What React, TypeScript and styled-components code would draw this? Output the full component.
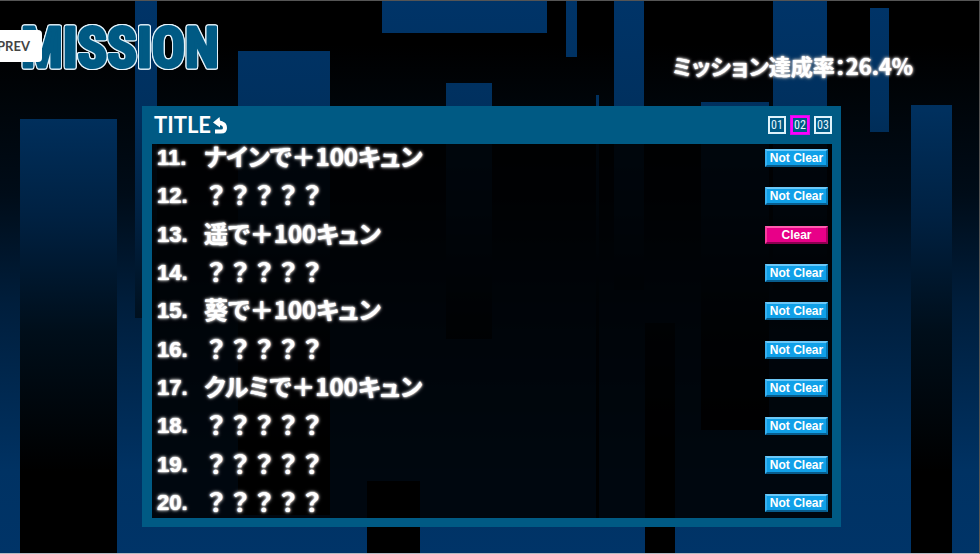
import React, { useState } from 'react';
import styled, { createGlobalStyle } from 'styled-components';

const gothic = '"Noto Sans CJK JP", sans-serif';
const sans = '"Liberation Sans", sans-serif';
const condensed =
  '"Roboto Condensed", "Open Sans Condensed", "Noto Sans Condensed", "Liberation Sans", sans-serif';
const teal = '#005a84';

const GlobalStyle = createGlobalStyle`
  *, *::before, *::after { box-sizing: border-box; }
  body { margin: 0; background: #000; color: #fff; font-family: ${gothic}; }
`;

const Page = styled.div`
  position: relative;
  isolation: isolate;
  display: flex;
  flex-direction: column;
  min-height: 100vh;
  overflow: hidden;
  border-top: 1px solid #555;
  border-right: 1px solid #555;
  border-bottom: 1px solid #b4bac2;
`;

const Backdrop = styled.svg`
  position: absolute;
  top: -1px;
  left: 0;
  z-index: -1;
  width: calc(100% + 1px);
  height: calc(100% + 2px);
`;

const Header = styled.header`
  display: flex;
  justify-content: space-between;
  height: 105px;
  padding: 16px 66px 0 18px;
`;

const Heading = styled.h1`
  margin: 0;
  line-height: 0;
`;

const Wordmark = styled.svg`
  width: 204px;
  height: 60px;
  overflow: visible;
  filter: drop-shadow(1px 0 0 #e4f2fa) drop-shadow(-1px 0 0 #e4f2fa)
    drop-shadow(0 1px 0 #e4f2fa) drop-shadow(0 -1px 0 #e4f2fa);

  text {
    font: bold 55px ${condensed};
    fill: ${teal};
    stroke: ${teal};
    stroke-width: 3px;
    stroke-linejoin: round;
  }
`;

const glow = `
  text-shadow: 0 0 1px #fff, 0 0 2px #ccc, 0 0 3px #ccc, 0 0 4px #aaa;
`;

const Rate = styled.p`
  margin: 30px 0 0;
  font-size: 22px;
  line-height: 36px;
  font-weight: 700;
  font-feature-settings: "palt";
  white-space: nowrap;
  ${glow}
`;

const PrevButton = styled.button`
  position: absolute;
  top: 29px;
  left: -12px;
  height: 32px;
  padding: 0 12px 0 9px;
  border: 0;
  border-radius: 4px;
  background: #fff;
  color: #444;
  font: bold 13px Lato, sans-serif;
  cursor: pointer;
`;

const Panel = styled.main`
  flex: 1;
  display: flex;
  flex-direction: column;
  margin: 0 138px 26px 142px;
  border: solid ${teal};
  border-width: 0 9px 9px 10px;
`;

const PanelBar = styled.div`
  display: flex;
  align-items: center;
  justify-content: space-between;
  height: 38px;
  background: ${teal};
`;

const TitleLink = styled.a`
  display: flex;
  align-items: center;
  gap: 2px;
  padding-left: 2px;
  color: #fff;
  font: bold 22px/38px Lato, sans-serif;
  text-decoration: none;
`;

const Pager = styled.nav`
  display: flex;
  gap: 5px;
`;

const PageButton = styled.button<{ $active: boolean }>`
  width: 18px;
  height: 18px;
  padding: 0;
  border: 2px solid ${(p) => (p.$active ? '#f0f' : '#dff2fa')};
  background: ${teal};
  box-shadow: ${(p) => (p.$active ? '0 0 0 1px #d010e8' : 'none')};
  color: #e6f6ff;
  font: 12px/14px ${condensed};
  cursor: pointer;
`;

const MissionList = styled.ol`
  flex: 1;
  display: flex;
  flex-direction: column;
  justify-content: space-between;
  margin: 0;
  padding: 0 4px 1px 5px;
  list-style: none;
  background: rgba(0, 0, 0, 0.85);
`;

const MissionRow = styled.li`
  display: grid;
  grid-template-columns: 47px 1fr 63px;
  align-items: center;
  height: 28px;
`;

const Num = styled.span`
  font: bold 22px/28px ${sans};
  ${glow}
`;

const Name = styled.span<{ $hidden: boolean }>`
  align-self: start;
  font-size: 24px;
  line-height: 24px;
  font-weight: 700;
  font-feature-settings: ${(p) => (p.$hidden ? 'normal' : '"palt"')};
  white-space: nowrap;
  ${glow}
`;

const Badge = styled.span<{ $clear: boolean }>`
  height: 18px;
  border: 2px solid;
  border-color: ${(p) =>
    p.$clear ? '#ff5cae #a80060 #8c0050 #f83c9c' : '#6cc8f8 #0878b4 #085c8c #38b0f0'};
  background: ${(p) => (p.$clear ? '#e80088' : '#10a0e8')};
  color: #fff;
  font: bold 12px/15px ${sans};
  text-align: center;
  white-space: nowrap;
`;

const bars = [
  [20, 119, 97, 435],
  [135, 0, 22, 318],
  [238, 51, 92, 464],
  [382, 0, 165, 33],
  [446, 83, 46, 256],
  [566, 0, 11, 57],
  [596, 95, 3, 423],
  [614, 0, 30, 290],
  [645, 323, 30, 231],
  [701, 102, 68, 328],
  [773, 0, 54, 290],
  [870, 8, 19, 124],
  [911, 105, 41, 449],
  [367, 481, 53, 73],
];

const unknown = '？？？？？';
const missions = [
  { no: 11, name: 'ナインで＋100キュン' },
  { no: 12, name: unknown },
  { no: 13, name: '遥で＋100キュン', clear: true },
  { no: 14, name: unknown },
  { no: 15, name: '葵で＋100キュン' },
  { no: 16, name: unknown },
  { no: 17, name: 'クルミで＋100キュン' },
  { no: 18, name: unknown },
  { no: 19, name: unknown },
  { no: 20, name: unknown },
];

function CityBars() {
  return (
    <Backdrop viewBox="0 0 980 554" preserveAspectRatio="none" aria-hidden="true">
      <defs>
        <linearGradient id="sky" gradientUnits="userSpaceOnUse" x1="0" y1="0" x2="0" y2="554">
          <stop offset="0.08" stopColor="#000" />
          <stop offset="0.35" stopColor="#000c18" />
          <stop offset="0.55" stopColor="#001e3c" />
          <stop offset="0.85" stopColor="#003263" />
          <stop offset="1" stopColor="#003468" />
        </linearGradient>
        <linearGradient id="bar" gradientUnits="userSpaceOnUse" x1="0" y1="0" x2="0" y2="554">
          <stop offset="0" stopColor="#003468" />
          <stop offset="0.2" stopColor="#00305e" />
          <stop offset="0.4" stopColor="#002040" />
          <stop offset="0.6" stopColor="#000e1a" />
          <stop offset="0.85" stopColor="#000" />
        </linearGradient>
      </defs>
      <rect width="980" height="554" fill="url(#sky)" />
      {bars.map(([x, y, width, height]) => (
        <rect key={x} x={x} y={y} width={width} height={height} fill="url(#bar)" />
      ))}
    </Backdrop>
  );
}

export default function App() {
  const [page, setPage] = useState('02');
  return (
    <>
      <GlobalStyle />
      <Page>
        <CityBars />
        <Header>
          <Heading>
            <Wordmark viewBox="0 0 204 60" role="img" aria-label="MISSION">
              <text x="3" y="50">MISSION</text>
            </Wordmark>
          </Heading>
          <Rate>ミッション達成率：26.4%</Rate>
        </Header>
        <PrevButton type="button">PREV</PrevButton>
        <Panel>
          <PanelBar>
            <TitleLink href="#title">
              TITLE
              <svg width="15" height="17" viewBox="0 0 15 17" aria-hidden="true">
                <path d="M0 5.5 6.5 0 7 3.5 10 5 7 7.5 7 10.5Z" fill="#fff" />
                <path
                  d="M5 5.5 9 6.5Q12 7.5 12 11 12 14.500 8 14.500H2"
                  fill="none"
                  stroke="#fff"
                  strokeWidth="4"
                />
              </svg>
            </TitleLink>
            <Pager aria-label="Mission pages">
              {['01', '02', '03'].map((label) => (
                <PageButton
                  key={label}
                  type="button"
                  $active={label === page}
                  aria-current={label === page ? 'page' : undefined}
                  onClick={() => setPage(label)}
                >
                  {label}
                </PageButton>
              ))}
            </Pager>
          </PanelBar>
          <MissionList>
            {missions.map(({ no, name, clear }) => (
              <MissionRow key={no}>
                <Num>{no}.</Num>
                <Name $hidden={name === unknown}>{name}</Name>
                <Badge $clear={!!clear}>{clear ? 'Clear' : 'Not Clear'}</Badge>
              </MissionRow>
            ))}
          </MissionList>
        </Panel>
      </Page>
    </>
  );
}
